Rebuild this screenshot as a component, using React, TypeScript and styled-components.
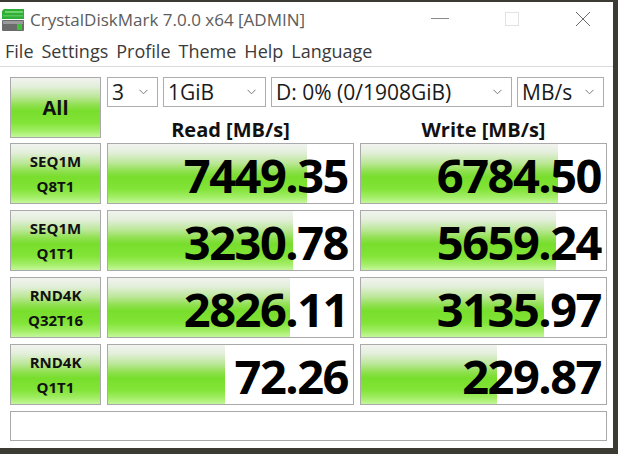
import styled, { createGlobalStyle } from 'styled-components';

const GlobalStyle = createGlobalStyle`
  html, body {
    margin: 0;
    padding: 0;
    background: #3b3a33;
    overflow: hidden;
  }
  body {
    font-family: 'Open Sans', 'Noto Sans', sans-serif;
  }
`;

type Result = { label: [string, string]; read: string; readFill: number; write: string; writeFill: number };

const results: Result[] = [
  { label: ['SEQ1M', 'Q8T1'], read: '7449.35', readFill: 199, write: '6784.50', writeFill: 197 },
  { label: ['SEQ1M', 'Q1T1'], read: '3230.78', readFill: 185, write: '5659.24', writeFill: 195 },
  { label: ['RND4K', 'Q32T16'], read: '2826.11', readFill: 182, write: '3135.97', writeFill: 183 },
  { label: ['RND4K', 'Q1T1'], read: '72.26', readFill: 117, write: '229.87', writeFill: 136 },
];

const menuItems = ['File', 'Settings', 'Profile', 'Theme', 'Help', 'Language'];

function AppIcon() {
  return (
    <svg width='24' height='24' viewBox='0 0 24 24'>
      <path d='M3 1 H23 V11 H1 V3 Z' fill='#2fae3a' />
      <rect x='4' y='3' width='18' height='2' fill='#6fd46a' />
      <rect x='2' y='7' width='20' height='1.5' fill='#57c657' />
      <rect x='1' y='12' width='22' height='11' rx='1' fill='#6b6b6b' />
      <rect x='2' y='13' width='20' height='3' fill='#9a9a9a' />
      <rect x='16' y='16' width='5' height='6' fill='#3fbf3a' />
    </svg>
  );
}

function Chevron() {
  return (
    <ChevronIcon width='9' height='6' viewBox='0 0 9 6'>
      <path d='M0.5 0.8 L4.5 4.8 L8.5 0.8' fill='none' stroke='#7a7a7a' strokeWidth='1' />
    </ChevronIcon>
  );
}

function App() {
  return (
    <>
      <GlobalStyle />
      <Window>
        <TitleBar>
          <IconSlot>
            <AppIcon />
          </IconSlot>
          <Title>CrystalDiskMark 7.0.0 x64 [ADMIN]</Title>
          <Controls>
            <ControlButton $w={64}>
              <svg width='18' height='2' viewBox='0 0 18 2'>
                <rect x='0' y='0' width='18' height='1' fill='#8a8a8a' />
              </svg>
            </ControlButton>
            <ControlButton $w={80}>
              <svg width='14' height='14' viewBox='0 0 14 14'>
                <rect x='0.5' y='0.5' width='13' height='13' fill='none' stroke='#e2e2e2' />
              </svg>
            </ControlButton>
            <ControlButton $w={61}>
              <svg width='16' height='16' viewBox='0 0 16 16'>
                <path d='M1 1 L15 15 M15 1 L1 15' stroke='#6a6a6a' strokeWidth='1' />
              </svg>
            </ControlButton>
          </Controls>
        </TitleBar>
        <MenuBar>
          {menuItems.map((m) => (
            <MenuItem key={m}>{m}</MenuItem>
          ))}
        </MenuBar>
        <Content>
          <TopSection>
            <AllButton>All</AllButton>
            <TopRight>
              <SelectRow>
                <Select $w={51}>
                  <span>3</span>
                  <Chevron />
                </Select>
                <Select $w={103}>
                  <span>1GiB</span>
                  <Chevron />
                </Select>
                <Select $w={241}>
                  <span>D: 0% (0/1908GiB)</span>
                  <Chevron />
                </Select>
                <Select $w={87}>
                  <span>MB/s</span>
                  <Chevron />
                </Select>
              </SelectRow>
              <HeaderRow>
                <Header>Read [MB/s]</Header>
                <Header>Write [MB/s]</Header>
              </HeaderRow>
            </TopRight>
          </TopSection>
          {results.map((r) => (
            <ResultRow key={r.label.join('-')}>
              <TestButton>
                <span>{r.label[0]}</span>
                <span>{r.label[1]}</span>
              </TestButton>
              <ValueCell $fill={r.readFill}>{r.read}</ValueCell>
              <ValueCell $fill={r.writeFill}>{r.write}</ValueCell>
            </ResultRow>
          ))}
          <CommentBox />
        </Content>
      </Window>
    </>
  );
}

export default App;

const greenGradient = `linear-gradient(
  180deg,
  #f1f3ef 0%,
  #e4efdc 14%,
  #bce798 32%,
  #8fe04f 46%,
  #78de2c 56%,
  #82e437 76%,
  #a2ee66 90%,
  #c4f79a 100%
)`;

const Window = styled.div`
  width: 613px;
  height: 446px;
  margin-top: 2px;
  background: #ffffff;
  display: flex;
  flex-direction: column;
`;

const TitleBar = styled.div`
  height: 34px;
  display: flex;
  align-items: center;
`;

const IconSlot = styled.div`
  width: 26px;
  padding-left: 1px;
  display: flex;
  align-items: center;
  margin-top: 2px;
`;

const Title = styled.div`
  margin-left: 3px;
  font-size: 17px;
  color: #5c5c5c;
  white-space: nowrap;
`;

const Controls = styled.div`
  margin-left: auto;
  display: flex;
  align-self: stretch;
`;

const ControlButton = styled.div<{ $w: number }>`
  width: ${(p) => p.$w}px;
  display: flex;
  align-items: center;
  justify-content: center;
`;

const MenuBar = styled.div`
  height: 30px;
  display: flex;
  align-items: center;
  gap: 8px;
  padding-left: 5px;
  border-bottom: 1px solid #dadada;
`;

const MenuItem = styled.span`
  font-size: 18px;
  color: #3a3a3a;
`;

const Content = styled.div`
  padding: 10px 6px 0 10px;
  display: flex;
  flex-direction: column;
`;

const TopSection = styled.div`
  display: flex;
  gap: 6px;
  height: 66px;
`;

const AllButton = styled.div`
  width: 91px;
  height: 61px;
  box-sizing: border-box;
  border: 1px solid #a9a9a9;
  background: ${greenGradient};
  display: flex;
  align-items: center;
  justify-content: center;
  font-weight: 700;
  font-size: 20px;
  color: #111;
`;

const TopRight = styled.div`
  flex: 1;
  display: flex;
  flex-direction: column;
`;

const SelectRow = styled.div`
  display: flex;
  gap: 5px;
  height: 30px;
`;

const Select = styled.div<{ $w: number }>`
  width: ${(p) => p.$w}px;
  box-sizing: border-box;
  border: 1px solid #adadad;
  background: #fff;
  display: flex;
  align-items: center;
  justify-content: space-between;
  padding: 0 9px 0 4px;
  font-size: 21px;
  color: #1a1a1a;
  white-space: nowrap;
`;

const ChevronIcon = styled.svg`
  flex-shrink: 0;
`;

const HeaderRow = styled.div`
  flex: 1;
  display: grid;
  grid-template-columns: 247px 247px;
  column-gap: 6px;
  align-items: end;
`;

const Header = styled.div`
  text-align: center;
  font-weight: 700;
  font-size: 20px;
  color: #111;
  line-height: 26px;
`;

const ResultRow = styled.div`
  display: grid;
  grid-template-columns: 91px 247px 247px;
  column-gap: 6px;
  height: 61px;
  & + & {
    margin-top: 6px;
  }
`;

const TestButton = styled.div`
  box-sizing: border-box;
  border: 1px solid #a9a9a9;
  background: ${greenGradient};
  display: flex;
  flex-direction: column;
  align-items: center;
  justify-content: center;
  gap: 4px;
  font-weight: 700;
  font-size: 15px;
  line-height: 21px;
  color: #111;
`;

const ValueCell = styled.div<{ $fill: number }>`
  box-sizing: border-box;
  border: 1px solid #a9a9a9;
  background: ${greenGradient} no-repeat, #ffffff;
  background-size: ${(p) => p.$fill}px 100%, auto;
  display: flex;
  align-items: center;
  justify-content: flex-end;
  padding: 3px 5px 0 0;
  font-weight: 700;
  font-size: 47px;
  letter-spacing: -1.5px;
  color: #000;
  line-height: 1;
`;

const CommentBox = styled.div`
  margin-top: 6px;
  height: 30px;
  width: 597px;
  box-sizing: border-box;
  border: 1px solid #a9a9a9;
  background: #fff;
`;
